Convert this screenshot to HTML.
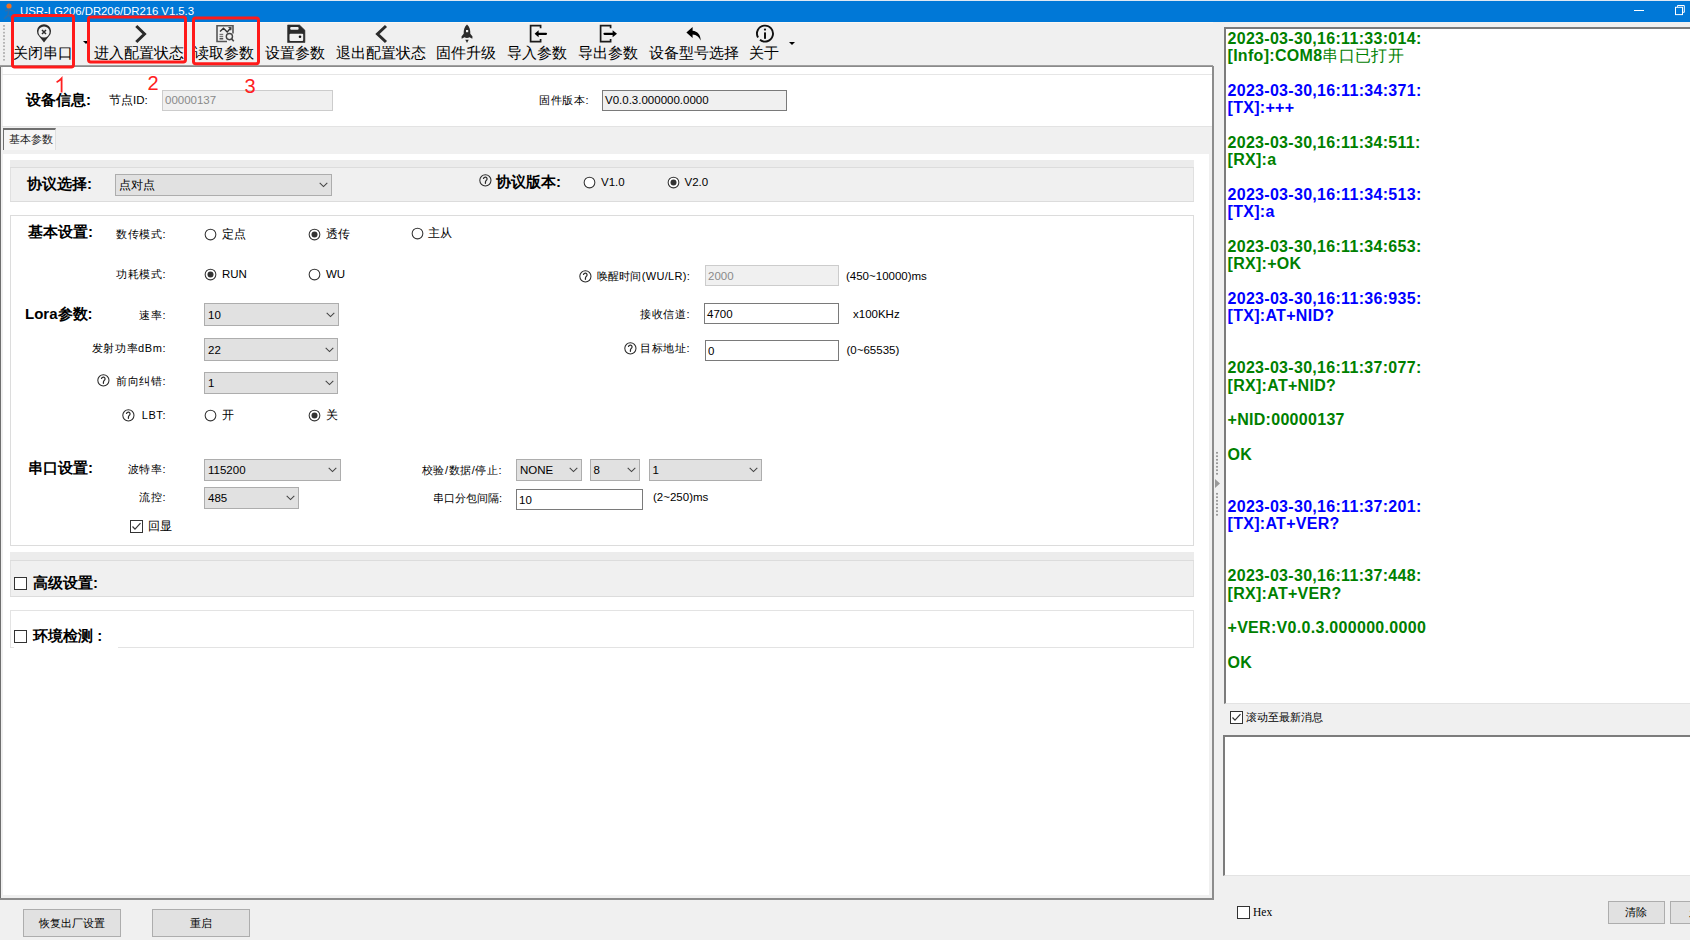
<!DOCTYPE html>
<html><head><meta charset="utf-8"><style>
html,body{margin:0;padding:0;}
body{width:1690px;height:940px;overflow:hidden;position:relative;background:#f0f0f0;font-family:"Liberation Sans", sans-serif;}
body>div{position:absolute;}
.t{white-space:nowrap;}
.log{white-space:nowrap;}
</style></head><body>
<div style="left:0px;top:0px;width:1690px;height:22px;background:#0078d7"></div>
<div style="left:0px;top:0px;width:1690px;height:1px;background:#dfe8f3"></div>
<svg style="position:absolute;left:2px;top:2px" width="16" height="18" viewBox="0 0 16 18"><circle cx="7" cy="4" r="2.6" fill="#f07020"/><path d="M3 9 L7 7.5 L12 9 M7 7.5 L6 13 L2 17 M6 13 L10 16" stroke="#2a6fb0" stroke-width="1.6" fill="none"/></svg>
<div style="left:20px;top:4px;width:200px;height:11.3px;overflow:hidden"><div class="t" style="position:absolute;left:0px;top:-0.4px;font-size:11.4px;line-height:14px;color:#fff;letter-spacing:-0.05px">USR-LG206/DR206/DR216 V1.5.3</div></div>
<div style="left:1634px;top:10px;width:9.5px;height:1.2px;background:#fff"></div>
<svg style="position:absolute;left:1674px;top:4px" width="12" height="12" viewBox="0 0 12 12"><path d="M3.5 2.8 V1.5 H10.3 V8.3 H9" stroke="#fff" stroke-width="1" fill="none"/><rect x="1.5" y="3.3" width="7" height="7.3" stroke="#fff" stroke-width="1" fill="none"/></svg>
<div style="left:0px;top:22px;width:1213px;height:43px;background:#f0f0f0"></div>
<div style="left:0px;top:22px;width:1213px;height:1px;background:#fbf7f3"></div>
<div style="left:0px;top:65px;width:1213px;height:1px;background:#a0a0a0"></div>
<div style="left:3px;top:25px;width:1.5px;height:36px;background-image:linear-gradient(#b4b4b4 40%,transparent 40%);background-size:2px 3.4px"></div>
<div class="t" style="left:13px;top:45px;font-size:15px;line-height:15px;color:#000">关闭串口</div>
<div class="t" style="left:94px;top:45px;font-size:15px;line-height:15px;color:#000">进入配置状态</div>
<div class="t" style="left:194px;top:45px;font-size:15px;line-height:15px;color:#000">读取参数</div>
<div class="t" style="left:265px;top:45px;font-size:15px;line-height:15px;color:#000">设置参数</div>
<div class="t" style="left:336px;top:45px;font-size:15px;line-height:15px;color:#000">退出配置状态</div>
<div class="t" style="left:436px;top:45px;font-size:15px;line-height:15px;color:#000">固件升级</div>
<div class="t" style="left:506.5px;top:45px;font-size:15px;line-height:15px;color:#000">导入参数</div>
<div class="t" style="left:578px;top:45px;font-size:15px;line-height:15px;color:#000">导出参数</div>
<div class="t" style="left:649px;top:45px;font-size:15px;line-height:15px;color:#000">设备型号选择</div>
<div class="t" style="left:748.5px;top:45px;font-size:15px;line-height:15px;color:#000">关于</div>
<svg style="position:absolute;left:83px;top:41px" width="6" height="4"><path d="M0 0H6L3 3Z" fill="#000"/></svg>
<svg style="position:absolute;left:789px;top:41.5px" width="6" height="4"><path d="M0 0H6L3 3Z" fill="#000"/></svg>
<svg style="position:absolute;left:34px;top:23px" width="20" height="21" viewBox="0 0 20 21"><path d="M4.5 12.5 A7 7 0 1 1 15.5 12.5 L10 19.5 Z" fill="#2b2b2b"/><circle cx="10" cy="9" r="5.6" fill="#f0f0f0"/><path d="M8 7 L12 11 M12 7 L8 11" stroke="#2b2b2b" stroke-width="1.5"/></svg>
<svg style="position:absolute;left:132px;top:23px" width="16" height="21" viewBox="0 0 16 21"><path d="M4.3 3 L12.5 11 L4.3 19" stroke="#2b2b2b" stroke-width="3" fill="none" stroke-linejoin="miter"/></svg>
<svg style="position:absolute;left:214px;top:23px" width="22" height="21" viewBox="0 0 22 21"><path d="M19 10.5 V2.8 H3 V18.5 H13" stroke="#555" stroke-width="1.6" fill="none"/><path d="M6 8.6 L9.5 5.2 L13.2 8.9 L16.5 5.3" stroke="#333" stroke-width="1.4" fill="none"/><path d="M14.5 4.5 L17 4.8 L16.7 7.3" stroke="#333" stroke-width="1.2" fill="none"/><rect x="5.5" y="10.8" width="3.7" height="1.3" fill="#777"/><rect x="5.5" y="12.9" width="3.7" height="1.3" fill="#777"/><rect x="5.5" y="15" width="3.7" height="1.5" fill="#555"/><circle cx="15.4" cy="13.6" r="3.1" stroke="#444" stroke-width="1.4" fill="none"/><path d="M17.6 15.9 L19.8 18.3" stroke="#444" stroke-width="1.6"/></svg>
<svg style="position:absolute;left:286px;top:23px" width="20" height="21" viewBox="0 0 20 21"><path d="M1.6 2 H13.5 L18.9 7.2 V19.5 H1.6 Z" fill="#2b2b2b" stroke="#2b2b2b" stroke-width="0.6" stroke-linejoin="round"/><rect x="4.2" y="4" width="8.4" height="2.8" rx="1" fill="#f0f0f0"/><rect x="3.5" y="10.8" width="13.7" height="7.2" rx="1" fill="#f0f0f0"/><circle cx="14" cy="13.7" r="1.3" fill="#111"/></svg>
<svg style="position:absolute;left:372px;top:23px" width="16" height="21" viewBox="0 0 16 21"><path d="M14 3 L5.5 11 L14 19" stroke="#2b2b2b" stroke-width="3" fill="none"/></svg>
<svg style="position:absolute;left:458px;top:23px" width="18" height="21" viewBox="0 0 18 21"><path d="M9 1.5 C11.5 3.5 12.5 7 12.3 10.8 L14.5 13.5 L14.3 15.8 L11.6 14.2 C10 15.2 8 15.2 6.4 14.2 L3.7 15.8 L3.5 13.5 L5.7 10.8 C5.5 7 6.5 3.5 9 1.5 Z" fill="#2b2b2b"/><rect x="8" y="7" width="2.2" height="2.2" fill="#f0f0f0"/><path d="M7.3 16.8 H10.7 L9 20 Z" fill="#2b2b2b"/></svg>
<svg style="position:absolute;left:527px;top:23px" width="22" height="21" viewBox="0 0 22 21"><path d="M13.6 5.3 V2.7 H3.6 V18.6 H13.6 V16" stroke="#1a1a1a" stroke-width="1.7" fill="none"/><path d="M19 10.8 H10.5" stroke="#000" stroke-width="2.2" stroke-linecap="round"/><path d="M7.6 10.8 L11.6 7.3 V14.3 Z" fill="#000"/></svg>
<svg style="position:absolute;left:597px;top:23px" width="22" height="21" viewBox="0 0 22 21"><path d="M13.6 5.3 V2.7 H3.6 V18.6 H13.6 V16" stroke="#1a1a1a" stroke-width="1.7" fill="none"/><path d="M7.5 10.8 H16" stroke="#000" stroke-width="2.2" stroke-linecap="round"/><path d="M20 10.8 L15.6 7.3 V14.3 Z" fill="#000"/></svg>
<svg style="position:absolute;left:684px;top:23px" width="20" height="21" viewBox="0 0 20 21"><path d="M2.4 9.6 L8.6 4 V7.7 C13.5 8 16.8 12 16.6 17.5 C15 13.8 12.5 11.8 8.6 11.6 V15 Z" fill="#000"/></svg>
<svg style="position:absolute;left:754px;top:23px" width="22" height="21" viewBox="0 0 22 21"><path d="M4.07 14.6 A8 8 0 1 1 5.97 16.82" stroke="#111" stroke-width="1.9" fill="none"/><circle cx="11" cy="6.6" r="1.15" fill="#111"/><rect x="10" y="9.4" width="2" height="6.4" fill="#111"/></svg>
<div style="left:0px;top:66px;width:1214px;height:834px;background:#fff"></div>
<div style="left:0px;top:66px;width:1px;height:834px;background:#6e6e6e"></div>
<div style="left:1px;top:66px;width:1.5px;height:834px;background:#f0f0f0"></div>
<div style="left:0px;top:65.5px;width:1214px;height:1px;background:#8a8a8a"></div>
<div style="left:1212px;top:66px;width:2px;height:834px;background:#8c8c8c"></div>
<div style="left:1209px;top:154px;width:3px;height:741px;background:#f0f0f0"></div>
<div style="left:0px;top:898px;width:1214px;height:2px;background:#8c8c8c"></div>
<div style="left:2px;top:895px;width:1210px;height:3px;background:#f0f0f0"></div>
<div style="left:2px;top:74px;width:1210px;height:1px;background:#e6e6e6"></div>
<div class="t" style="left:26px;top:92px;font-size:15px;line-height:15px;color:#000"><b>设备信息:</b></div>
<div class="t" style="left:109px;top:94px;font-size:11.5px;line-height:12px;color:#000">节点ID:</div>
<div style="left:162px;top:90px;width:171px;height:21px;background:#f0f0f0;border:1px solid #cccccc;box-sizing:border-box"></div>
<div class="t" style="left:165px;top:94px;font-size:11.5px;line-height:12px;color:#8a8a8a">00000137</div>
<div class="t" style="left:539px;top:94px;font-size:11px;line-height:12px;color:#000;letter-spacing:0.6px">固件版本:</div>
<div style="left:602px;top:90px;width:185px;height:21px;background:#f0f0f0;border:1px solid #7a7a7a;box-sizing:border-box"></div>
<div class="t" style="left:605px;top:94px;font-size:11.5px;line-height:12px;color:#000">V0.0.3.000000.0000</div>
<div style="left:2px;top:126px;width:1210px;height:1px;background:#e3e3e3"></div>
<div style="left:2px;top:127px;width:1210px;height:27px;background:#f0f0f0"></div>
<div style="left:3px;top:128px;width:53px;height:22px;background:#f6f6f6;border-left:1.5px solid #6f6f6f;border-top:2px solid #6f6f6f;border-right:1px solid #e0e0e0;box-sizing:border-box"></div>
<div class="t" style="left:9px;top:133px;font-size:11px;line-height:12px;color:#222">基本参数</div>
<div style="left:4px;top:154px;width:1205px;height:741px;background:#fff"></div>
<div style="left:10px;top:160px;width:1184px;height:42px;background:#f0f0f0;border:1px solid #e0e0e0;border-top:none;box-sizing:border-box"></div>
<div style="left:10px;top:160px;width:1184px;height:7px;background:#ececec"></div>
<div style="left:10px;top:167px;width:1184px;height:1px;background:#dcdcdc"></div>
<div style="left:10px;top:201px;width:1184px;height:1px;background:#dcdcdc"></div>
<div class="t" style="left:27px;top:176px;font-size:15px;line-height:15px;color:#000"><b>协议选择:</b></div>
<div style="left:115px;top:174px;width:217px;height:22px;background:#e1e1e1;border:1px solid #adadad;box-sizing:border-box"></div>
<div class="t" style="left:119px;top:179.0px;font-size:11.5px;line-height:12px;color:#000">点对点</div>
<svg style="position:absolute;left:319px;top:182.0px" width="9" height="6" viewBox="0 0 9 6"><path d="M0.7 0.8 L4.5 4.6 L8.3 0.8" stroke="#444" stroke-width="1.05" fill="none"/></svg>
<svg style="position:absolute;left:479px;top:174px" width="13" height="13" viewBox="0 0 13 13"><circle cx="6.4" cy="6.3" r="5.6" fill="none" stroke="#2a2a2a" stroke-width="1.05"/><path d="M4.5 4.4 C5 3.4 5.9 3.1 6.7 3.2 C7.8 3.4 8.3 4.4 7.9 5.4 C7.5 6.3 6.6 6.7 6.5 7.8 L6.4 9.3" stroke="#2a2a2a" stroke-width="1.25" fill="none" stroke-linecap="round"/></svg>
<div class="t" style="left:496px;top:174px;font-size:15px;line-height:15px;color:#000"><b>协议版本:</b></div>
<svg style="position:absolute;left:583.0px;top:175.6px" width="13" height="13" viewBox="0 0 13 13"><circle cx="6.5" cy="6.5" r="5.35" fill="#fff" stroke="#333" stroke-width="1.05"/></svg>
<div class="t" style="left:601px;top:176px;font-size:11.5px;line-height:12px;color:#000">V1.0</div>
<svg style="position:absolute;left:666.5px;top:175.6px" width="13" height="13" viewBox="0 0 13 13"><circle cx="6.5" cy="6.5" r="5.35" fill="#fff" stroke="#333" stroke-width="1.05"/><circle cx="6.5" cy="6.5" r="3" fill="#333"/></svg>
<div class="t" style="left:684.5px;top:176px;font-size:11.5px;line-height:12px;color:#000">V2.0</div>
<div style="left:10px;top:215px;width:1184px;height:331px;background:#fff;border:1px solid #dcdcdc;box-sizing:border-box"></div>
<div class="t" style="left:28px;top:224px;font-size:15px;line-height:15px;color:#000"><b>基本设置:</b></div>
<div class="t" style="left:0;width:166px;text-align:right;top:228px;font-size:11px;line-height:12px;color:#000;letter-spacing:0.55px;margin-right:-0.5px">数传模式:</div>
<svg style="position:absolute;left:204.0px;top:227.6px" width="13" height="13" viewBox="0 0 13 13"><circle cx="6.5" cy="6.5" r="5.35" fill="#fff" stroke="#333" stroke-width="1.05"/></svg>
<div class="t" style="left:222px;top:228px;font-size:11.5px;line-height:12px;color:#000">定点</div>
<svg style="position:absolute;left:308.0px;top:227.6px" width="13" height="13" viewBox="0 0 13 13"><circle cx="6.5" cy="6.5" r="5.35" fill="#fff" stroke="#333" stroke-width="1.05"/><circle cx="6.5" cy="6.5" r="3" fill="#333"/></svg>
<div class="t" style="left:326px;top:228px;font-size:11.5px;line-height:12px;color:#000">透传</div>
<svg style="position:absolute;left:410.5px;top:226.6px" width="13" height="13" viewBox="0 0 13 13"><circle cx="6.5" cy="6.5" r="5.35" fill="#fff" stroke="#333" stroke-width="1.05"/></svg>
<div class="t" style="left:428px;top:227px;font-size:11.5px;line-height:12px;color:#000">主从</div>
<div class="t" style="left:0;width:166px;text-align:right;top:268px;font-size:11px;line-height:12px;color:#000;letter-spacing:0.55px;margin-right:-0.5px">功耗模式:</div>
<svg style="position:absolute;left:203.5px;top:267.6px" width="13" height="13" viewBox="0 0 13 13"><circle cx="6.5" cy="6.5" r="5.35" fill="#fff" stroke="#333" stroke-width="1.05"/><circle cx="6.5" cy="6.5" r="3" fill="#333"/></svg>
<div class="t" style="left:222px;top:268px;font-size:11.5px;line-height:12px;color:#000">RUN</div>
<svg style="position:absolute;left:308.0px;top:267.6px" width="13" height="13" viewBox="0 0 13 13"><circle cx="6.5" cy="6.5" r="5.35" fill="#fff" stroke="#333" stroke-width="1.05"/></svg>
<div class="t" style="left:326px;top:268px;font-size:11.5px;line-height:12px;color:#000">WU</div>
<svg style="position:absolute;left:579px;top:270px" width="13" height="13" viewBox="0 0 13 13"><circle cx="6.4" cy="6.3" r="5.6" fill="none" stroke="#2a2a2a" stroke-width="1.05"/><path d="M4.5 4.4 C5 3.4 5.9 3.1 6.7 3.2 C7.8 3.4 8.3 4.4 7.9 5.4 C7.5 6.3 6.6 6.7 6.5 7.8 L6.4 9.3" stroke="#2a2a2a" stroke-width="1.25" fill="none" stroke-linecap="round"/></svg>
<div class="t" style="left:0;width:690px;text-align:right;top:270px;font-size:11px;line-height:12px;color:#000;letter-spacing:0.3px;margin-right:-0.3px">唤醒时间(WU/LR):</div>
<div style="left:705px;top:265px;width:134px;height:21px;background:#f0f0f0;border:1px solid #cccccc;box-sizing:border-box"></div>
<div class="t" style="left:708px;top:269.5px;font-size:11.5px;line-height:12px;color:#8a8a8a">2000</div>
<div class="t" style="left:846px;top:270px;font-size:11.5px;line-height:12px;color:#000">(450~10000)ms</div>
<div class="t" style="left:25px;top:305.5px;font-size:15px;line-height:15px;color:#000"><b>Lora参数:</b></div>
<div class="t" style="left:0;width:166px;text-align:right;top:309px;font-size:11px;line-height:12px;color:#000;letter-spacing:0.55px;margin-right:-0.5px">速率:</div>
<div style="left:204px;top:303px;width:135px;height:23px;background:#e1e1e1;border:1px solid #adadad;box-sizing:border-box"></div>
<div class="t" style="left:208px;top:308.5px;font-size:11.5px;line-height:12px;color:#000">10</div>
<svg style="position:absolute;left:326px;top:311.5px" width="9" height="6" viewBox="0 0 9 6"><path d="M0.7 0.8 L4.5 4.6 L8.3 0.8" stroke="#444" stroke-width="1.05" fill="none"/></svg>
<div class="t" style="left:0;width:166px;text-align:right;top:342px;font-size:11px;line-height:12px;color:#000;letter-spacing:0.55px;margin-right:-0.5px">发射功率dBm:</div>
<div style="left:204px;top:338px;width:134px;height:23px;background:#e1e1e1;border:1px solid #adadad;box-sizing:border-box"></div>
<div class="t" style="left:208px;top:343.5px;font-size:11.5px;line-height:12px;color:#000">22</div>
<svg style="position:absolute;left:325px;top:346.5px" width="9" height="6" viewBox="0 0 9 6"><path d="M0.7 0.8 L4.5 4.6 L8.3 0.8" stroke="#444" stroke-width="1.05" fill="none"/></svg>
<svg style="position:absolute;left:96.5px;top:374px" width="13" height="13" viewBox="0 0 13 13"><circle cx="6.4" cy="6.3" r="5.6" fill="none" stroke="#2a2a2a" stroke-width="1.05"/><path d="M4.5 4.4 C5 3.4 5.9 3.1 6.7 3.2 C7.8 3.4 8.3 4.4 7.9 5.4 C7.5 6.3 6.6 6.7 6.5 7.8 L6.4 9.3" stroke="#2a2a2a" stroke-width="1.25" fill="none" stroke-linecap="round"/></svg>
<div class="t" style="left:0;width:166px;text-align:right;top:375px;font-size:11px;line-height:12px;color:#000;letter-spacing:0.55px;margin-right:-0.5px">前向纠错:</div>
<div style="left:204px;top:372px;width:134px;height:22px;background:#e1e1e1;border:1px solid #adadad;box-sizing:border-box"></div>
<div class="t" style="left:208px;top:377.0px;font-size:11.5px;line-height:12px;color:#000">1</div>
<svg style="position:absolute;left:325px;top:380.0px" width="9" height="6" viewBox="0 0 9 6"><path d="M0.7 0.8 L4.5 4.6 L8.3 0.8" stroke="#444" stroke-width="1.05" fill="none"/></svg>
<svg style="position:absolute;left:121.5px;top:409px" width="13" height="13" viewBox="0 0 13 13"><circle cx="6.4" cy="6.3" r="5.6" fill="none" stroke="#2a2a2a" stroke-width="1.05"/><path d="M4.5 4.4 C5 3.4 5.9 3.1 6.7 3.2 C7.8 3.4 8.3 4.4 7.9 5.4 C7.5 6.3 6.6 6.7 6.5 7.8 L6.4 9.3" stroke="#2a2a2a" stroke-width="1.25" fill="none" stroke-linecap="round"/></svg>
<div class="t" style="left:0;width:166px;text-align:right;top:409px;font-size:11px;line-height:12px;color:#000;letter-spacing:0.55px;margin-right:-0.5px">LBT:</div>
<svg style="position:absolute;left:204.0px;top:409.1px" width="13" height="13" viewBox="0 0 13 13"><circle cx="6.5" cy="6.5" r="5.35" fill="#fff" stroke="#333" stroke-width="1.05"/></svg>
<div class="t" style="left:222px;top:409px;font-size:11.5px;line-height:12px;color:#000">开</div>
<svg style="position:absolute;left:308.0px;top:409.1px" width="13" height="13" viewBox="0 0 13 13"><circle cx="6.5" cy="6.5" r="5.35" fill="#fff" stroke="#333" stroke-width="1.05"/><circle cx="6.5" cy="6.5" r="3" fill="#333"/></svg>
<div class="t" style="left:325.5px;top:409px;font-size:11.5px;line-height:12px;color:#000">关</div>
<div class="t" style="left:0;width:690px;text-align:right;top:308px;font-size:11px;line-height:12px;color:#000;letter-spacing:0.55px;margin-right:-0.5px">接收信道:</div>
<div style="left:704px;top:303px;width:135px;height:21px;background:#fff;border:1px solid #7a7a7a;box-sizing:border-box"></div>
<div class="t" style="left:707px;top:307.5px;font-size:11.5px;line-height:12px;color:#000">4700</div>
<div class="t" style="left:853px;top:308px;font-size:11.5px;line-height:12px;color:#000">x100KHz</div>
<svg style="position:absolute;left:623.5px;top:341.5px" width="13" height="13" viewBox="0 0 13 13"><circle cx="6.4" cy="6.3" r="5.6" fill="none" stroke="#2a2a2a" stroke-width="1.05"/><path d="M4.5 4.4 C5 3.4 5.9 3.1 6.7 3.2 C7.8 3.4 8.3 4.4 7.9 5.4 C7.5 6.3 6.6 6.7 6.5 7.8 L6.4 9.3" stroke="#2a2a2a" stroke-width="1.25" fill="none" stroke-linecap="round"/></svg>
<div class="t" style="left:0;width:690px;text-align:right;top:342px;font-size:11px;line-height:12px;color:#000;letter-spacing:0.55px;margin-right:-0.5px">目标地址:</div>
<div style="left:705px;top:340px;width:134px;height:21px;background:#fff;border:1px solid #7a7a7a;box-sizing:border-box"></div>
<div class="t" style="left:708px;top:344.5px;font-size:11.5px;line-height:12px;color:#000">0</div>
<div class="t" style="left:846.5px;top:344px;font-size:11.5px;line-height:12px;color:#000">(0~65535)</div>
<div class="t" style="left:28px;top:460px;font-size:15px;line-height:15px;color:#000"><b>串口设置:</b></div>
<div class="t" style="left:0;width:166px;text-align:right;top:463px;font-size:11px;line-height:12px;color:#000;letter-spacing:0.55px;margin-right:-0.5px">波特率:</div>
<div style="left:204px;top:459px;width:137px;height:22px;background:#e1e1e1;border:1px solid #adadad;box-sizing:border-box"></div>
<div class="t" style="left:208px;top:464.0px;font-size:11.5px;line-height:12px;color:#000">115200</div>
<svg style="position:absolute;left:328px;top:467.0px" width="9" height="6" viewBox="0 0 9 6"><path d="M0.7 0.8 L4.5 4.6 L8.3 0.8" stroke="#444" stroke-width="1.05" fill="none"/></svg>
<div class="t" style="left:0;width:166px;text-align:right;top:491px;font-size:11px;line-height:12px;color:#000;letter-spacing:0.55px;margin-right:-0.5px">流控:</div>
<div style="left:204px;top:487px;width:95px;height:22px;background:#e1e1e1;border:1px solid #adadad;box-sizing:border-box"></div>
<div class="t" style="left:208px;top:492.0px;font-size:11.5px;line-height:12px;color:#000">485</div>
<svg style="position:absolute;left:286px;top:495.0px" width="9" height="6" viewBox="0 0 9 6"><path d="M0.7 0.8 L4.5 4.6 L8.3 0.8" stroke="#444" stroke-width="1.05" fill="none"/></svg>
<svg style="position:absolute;left:130px;top:520px" width="13" height="13" viewBox="0 0 13 13"><rect x="0.5" y="0.5" width="12" height="12" fill="#fff" stroke="#333" stroke-width="1"/><path d="M2.5 6.5 L5 9.2 L10.5 3.2" stroke="#333" stroke-width="1.2" fill="none"/></svg>
<div class="t" style="left:148px;top:520px;font-size:11.5px;line-height:12px;color:#000">回显</div>
<div class="t" style="left:0;width:502px;text-align:right;top:464px;font-size:11px;line-height:12px;color:#000;letter-spacing:0.55px;margin-right:-0.5px">校验/数据/停止:</div>
<div style="left:516px;top:459px;width:66px;height:22px;background:#e1e1e1;border:1px solid #adadad;box-sizing:border-box"></div>
<div class="t" style="left:520px;top:464.0px;font-size:11.5px;line-height:12px;color:#000">NONE</div>
<svg style="position:absolute;left:569px;top:467.0px" width="9" height="6" viewBox="0 0 9 6"><path d="M0.7 0.8 L4.5 4.6 L8.3 0.8" stroke="#444" stroke-width="1.05" fill="none"/></svg>
<div style="left:589.5px;top:459px;width:50px;height:22px;background:#e1e1e1;border:1px solid #adadad;box-sizing:border-box"></div>
<div class="t" style="left:593.5px;top:464.0px;font-size:11.5px;line-height:12px;color:#000">8</div>
<svg style="position:absolute;left:626.5px;top:467.0px" width="9" height="6" viewBox="0 0 9 6"><path d="M0.7 0.8 L4.5 4.6 L8.3 0.8" stroke="#444" stroke-width="1.05" fill="none"/></svg>
<div style="left:648.5px;top:459px;width:113px;height:22px;background:#e1e1e1;border:1px solid #adadad;box-sizing:border-box"></div>
<div class="t" style="left:652.5px;top:464.0px;font-size:11.5px;line-height:12px;color:#000">1</div>
<svg style="position:absolute;left:748.5px;top:467.0px" width="9" height="6" viewBox="0 0 9 6"><path d="M0.7 0.8 L4.5 4.6 L8.3 0.8" stroke="#444" stroke-width="1.05" fill="none"/></svg>
<div class="t" style="left:0;width:502px;text-align:right;top:492px;font-size:11px;line-height:12px;color:#000;letter-spacing:0px">串口分包间隔:</div>
<div style="left:516px;top:489px;width:127px;height:21px;background:#fff;border:1px solid #7a7a7a;box-sizing:border-box"></div>
<div class="t" style="left:519px;top:493.5px;font-size:11.5px;line-height:12px;color:#000">10</div>
<div class="t" style="left:653px;top:491px;font-size:11.5px;line-height:12px;color:#000">(2~250)ms</div>
<div style="left:10px;top:552px;width:1184px;height:45px;background:#f0f0f0;border:1px solid #e0e0e0;border-top:none;box-sizing:border-box"></div>
<div style="left:10px;top:552px;width:1184px;height:8px;background:#ececec"></div>
<div style="left:10px;top:560px;width:1184px;height:1px;background:#dcdcdc"></div>
<div style="left:10px;top:596px;width:1184px;height:1px;background:#dcdcdc"></div>
<svg style="position:absolute;left:14px;top:577px" width="13" height="13" viewBox="0 0 13 13"><rect x="0.5" y="0.5" width="12" height="12" fill="#fff" stroke="#333" stroke-width="1"/></svg>
<div class="t" style="left:33px;top:575px;font-size:15px;line-height:15px;color:#000"><b>高级设置:</b></div>
<div style="left:10px;top:610px;width:1184px;height:38px;background:#fff;border:1px solid #e3e3e3;border-bottom:none;box-sizing:border-box"></div>
<div style="left:118px;top:647px;width:1076px;height:1px;background:#e3e3e3"></div>
<div style="left:10px;top:647px;width:4px;height:1px;background:#e3e3e3"></div>
<svg style="position:absolute;left:14px;top:629.5px" width="13" height="13" viewBox="0 0 13 13"><rect x="0.5" y="0.5" width="12" height="12" fill="#fff" stroke="#333" stroke-width="1"/></svg>
<div class="t" style="left:33px;top:628px;font-size:15px;line-height:15px;color:#000"><b>环境检测 :</b></div>
<div style="left:23px;top:909px;width:98px;height:28px;background:#e1e1e1;border:1px solid #adadad;box-sizing:border-box"></div>
<div class="t" style="left:23px;top:917.0px;width:98px;text-align:center;font-size:11px;line-height:12px;color:#000">恢复出厂设置</div>
<div style="left:152px;top:909px;width:98px;height:28px;background:#e1e1e1;border:1px solid #adadad;box-sizing:border-box"></div>
<div class="t" style="left:152px;top:917.0px;width:98px;text-align:center;font-size:11px;line-height:12px;color:#000">重启</div>
<div style="left:1214px;top:22px;width:10px;height:918px;background:#f0f0f0"></div>
<div style="left:1215px;top:451px;width:5px;height:25px;background-image:radial-gradient(circle,#999 0.8px,transparent 1px);background-size:4px 3.5px"></div>
<svg style="position:absolute;left:1214px;top:478px" width="8" height="12"><path d="M1 1 L6 5.5 L1 10 Z" fill="#999"/></svg>
<div style="left:1215px;top:492px;width:5px;height:25px;background-image:radial-gradient(circle,#999 0.8px,transparent 1px);background-size:4px 3.5px"></div>
<div style="left:1214px;top:22px;width:476px;height:5px;background:#f0f0f0"></div>
<div style="left:1224px;top:27px;width:466px;height:677px;background:#fff;border-top:2px solid #7c7c7c;border-left:2px solid #7c7c7c;border-bottom:1px solid #e3e3e3;box-sizing:border-box"></div>
<div class="log" style="left:1227.5px;top:30px;width:460px;font-size:16px;line-height:17.33px;font-weight:bold;letter-spacing:0.3px"><div style="position:static;color:#008000;height:17.33px">2023-03-30,16:11:33:014:</div><div style="position:static;color:#008000;height:17.33px">[Info]:COM8<span style="font-weight:normal;letter-spacing:0.3px">串口已打开</span></div><div style="position:static;color:#0000ff;height:17.33px"></div><div style="position:static;color:#0000ff;height:17.33px">2023-03-30,16:11:34:371:</div><div style="position:static;color:#0000ff;height:17.33px">[TX]:+++</div><div style="position:static;color:#0000ff;height:17.33px"></div><div style="position:static;color:#008000;height:17.33px">2023-03-30,16:11:34:511:</div><div style="position:static;color:#008000;height:17.33px">[RX]:a</div><div style="position:static;color:#0000ff;height:17.33px"></div><div style="position:static;color:#0000ff;height:17.33px">2023-03-30,16:11:34:513:</div><div style="position:static;color:#0000ff;height:17.33px">[TX]:a</div><div style="position:static;color:#0000ff;height:17.33px"></div><div style="position:static;color:#008000;height:17.33px">2023-03-30,16:11:34:653:</div><div style="position:static;color:#008000;height:17.33px">[RX]:+OK</div><div style="position:static;color:#0000ff;height:17.33px"></div><div style="position:static;color:#0000ff;height:17.33px">2023-03-30,16:11:36:935:</div><div style="position:static;color:#0000ff;height:17.33px">[TX]:AT+NID?</div><div style="position:static;color:#0000ff;height:17.33px"></div><div style="position:static;color:#0000ff;height:17.33px"></div><div style="position:static;color:#008000;height:17.33px">2023-03-30,16:11:37:077:</div><div style="position:static;color:#008000;height:17.33px">[RX]:AT+NID?</div><div style="position:static;color:#0000ff;height:17.33px"></div><div style="position:static;color:#008000;height:17.33px">+NID:00000137</div><div style="position:static;color:#0000ff;height:17.33px"></div><div style="position:static;color:#008000;height:17.33px">OK</div><div style="position:static;color:#0000ff;height:17.33px"></div><div style="position:static;color:#0000ff;height:17.33px"></div><div style="position:static;color:#0000ff;height:17.33px">2023-03-30,16:11:37:201:</div><div style="position:static;color:#0000ff;height:17.33px">[TX]:AT+VER?</div><div style="position:static;color:#0000ff;height:17.33px"></div><div style="position:static;color:#0000ff;height:17.33px"></div><div style="position:static;color:#008000;height:17.33px">2023-03-30,16:11:37:448:</div><div style="position:static;color:#008000;height:17.33px">[RX]:AT+VER?</div><div style="position:static;color:#0000ff;height:17.33px"></div><div style="position:static;color:#008000;height:17.33px">+VER:V0.0.3.000000.0000</div><div style="position:static;color:#0000ff;height:17.33px"></div><div style="position:static;color:#008000;height:17.33px">OK</div></div>
<svg style="position:absolute;left:1230px;top:711px" width="13" height="13" viewBox="0 0 13 13"><rect x="0.5" y="0.5" width="12" height="12" fill="#fff" stroke="#333" stroke-width="1"/><path d="M2.5 6.5 L5 9.2 L10.5 3.2" stroke="#333" stroke-width="1.2" fill="none"/></svg>
<div class="t" style="left:1246px;top:711px;font-size:11px;line-height:12px;color:#000">滚动至最新消息</div>
<div style="left:1223px;top:735px;width:467px;height:141px;background:#fff;border-top:2px solid #7c7c7c;border-left:2px solid #7c7c7c;border-bottom:1px solid #e3e3e3;box-sizing:border-box"></div>
<svg style="position:absolute;left:1237px;top:906px" width="13" height="13" viewBox="0 0 13 13"><rect x="0.5" y="0.5" width="12" height="12" fill="#fff" stroke="#333" stroke-width="1"/></svg>
<div class="t" style="left:1253px;top:906px;font-size:11.5px;line-height:12px;color:#000;font-family:Liberation Serif,serif;letter-spacing:0px">Hex</div>
<div style="left:1608px;top:901px;width:57px;height:23px;background:#e1e1e1;border:1px solid #adadad;box-sizing:border-box"></div>
<div class="t" style="left:1608px;top:906.5px;width:57px;text-align:center;font-size:11px;line-height:12px;color:#000"><span style="position:relative;left:-1px;top:-1px">清除</span></div>
<div style="left:1670px;top:901px;width:60px;height:23px;background:#e1e1e1;border:1px solid #adadad;box-sizing:border-box"></div>
<div class="t" style="left:1670px;top:906.5px;width:60px;text-align:center;font-size:11px;line-height:12px;color:#000">发送</div>
<svg style="position:absolute;left:0;top:0" width="300" height="80"><rect x="12.5" y="15.5" width="61" height="51.5" rx="2.2" fill="none" stroke="#ff1a1a" stroke-width="3"/></svg>
<svg style="position:absolute;left:0;top:0" width="300" height="80"><rect x="88.5" y="17.0" width="97" height="45.0" rx="2.2" fill="none" stroke="#ff1a1a" stroke-width="3"/></svg>
<svg style="position:absolute;left:0;top:0" width="300" height="80"><rect x="193.5" y="17.9" width="65" height="45.800000000000004" rx="2.2" fill="none" stroke="#ff1a1a" stroke-width="3"/></svg>
<svg style="position:absolute;left:54px;top:76px" width="12" height="18"><path d="M2.6 6.2 C4.6 5.2 6.2 4 7.6 2.4 V16.4" stroke="#ff2020" stroke-width="1.8" fill="none"/></svg>
<div class="t" style="left:147.5px;top:72.5px;font-size:20px;line-height:20px;color:#ff2020">2</div>
<div class="t" style="left:244.5px;top:75.5px;font-size:20px;line-height:20px;color:#ff2020">3</div>
</body></html>
